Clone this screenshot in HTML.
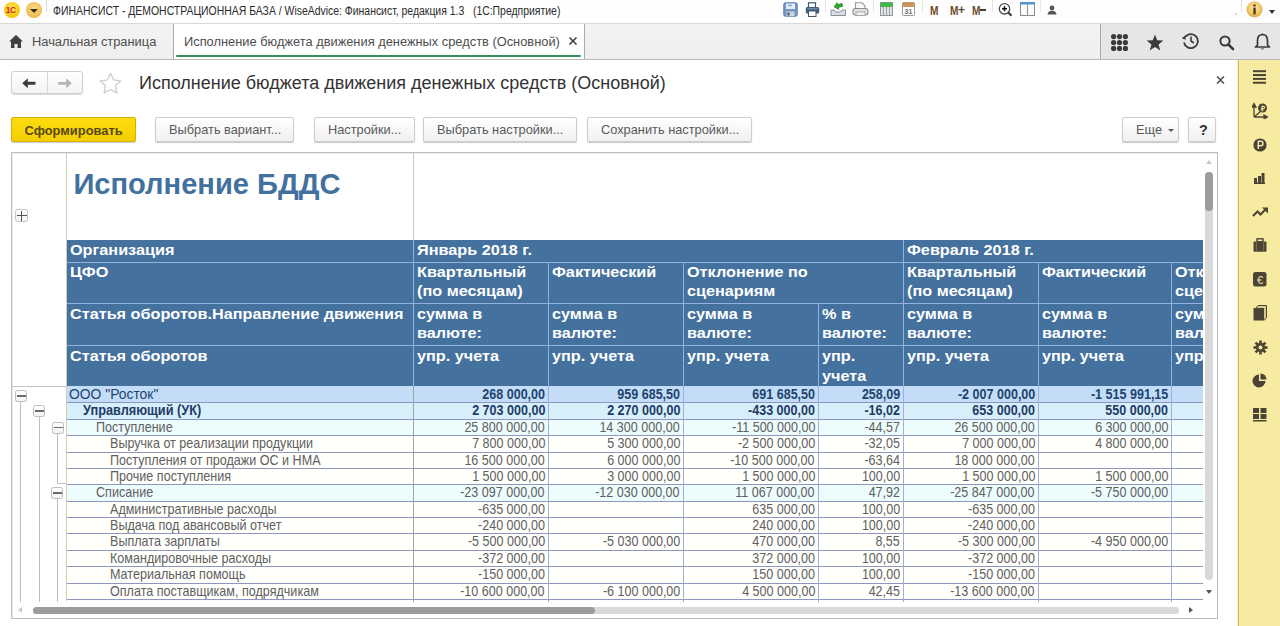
<!DOCTYPE html><html><head><meta charset="utf-8"><style>
*{box-sizing:border-box;margin:0;padding:0}
html,body{width:1280px;height:626px;overflow:hidden;background:#fff;font-family:"Liberation Sans",sans-serif;position:relative}
div,span,svg{position:absolute}
.t{white-space:nowrap}
.btn{height:25px;border:1px solid #cdcdcd;border-radius:2px;background:linear-gradient(#ffffff,#f0f0f0);box-shadow:0 1px 1px rgba(0,0,0,.22);font-size:12.8px;color:#5a5a5a;white-space:nowrap}
.btn span{top:4px;white-space:nowrap}
.hd{color:#fff;font-weight:bold;font-size:15px;line-height:19.2px;white-space:nowrap;transform:scaleX(1.082);transform-origin:0 0}
.dt{font-size:14.8px;white-space:nowrap;line-height:15px;transform:scaleX(0.848);transform-origin:0 0}
.dr{transform-origin:100% 0}
.num{text-align:right}
.mb{width:12px;height:12px;border:1px solid #bdbdbd;border-radius:2px;background:#fff}
.mb:after{content:"";position:absolute;left:2px;top:4px;width:6px;height:1.5px;background:#666}
</style></head><body>
<div style="left:0;top:0;width:1280px;height:24px;background:#fefefe;border-bottom:1px solid #d8d8d8"></div>
<div style="left:4px;top:2px;width:16px;height:16px;border-radius:50%;background:radial-gradient(circle at 50% 40%,#ffe66a,#f5c400 70%,#e0a800);"></div>
<span class="t" style="left:5.8px;top:5px;font-size:8.5px;font-weight:bold;color:#d02a10;letter-spacing:-0.6px">1С</span>
<div style="left:26px;top:2px;width:16px;height:16px;border-radius:50%;background:radial-gradient(circle at 50% 40%,#fbd98a,#efb94a 75%,#d99c2c)"></div>
<div style="left:30px;top:9px;width:0;height:0;border-left:4px solid transparent;border-right:4px solid transparent;border-top:4px solid #3a3020"></div>
<div style="left:46px;top:0;width:1px;height:12px;background:#dcdcdc"></div>
<span class="t" style="left:53px;top:3.5px;font-size:12px;color:#2a2a2a;transform:scaleX(0.869);transform-origin:0 0">ФИНАНСИСТ - ДЕМОНСТРАЦИОННАЯ БАЗА / WiseAdvice: Финансист, редакция 1.3 &nbsp; (1С:Предприятие)</span>
<div style="left:0;top:24px;width:1280px;height:36px;background:linear-gradient(#f3f3f3,#efefef);border-bottom:1px solid #b9b9b9"></div>
<svg style="left:9px;top:35px" width="14" height="13" viewBox="0 0 14 13"><path d="M7 0 L14 6.5 L12 6.5 L12 13 L8.5 13 L8.5 9 L5.5 9 L5.5 13 L2 13 L2 6.5 L0 6.5 Z" fill="#3f3f3f"/></svg>
<span class="t" style="left:32px;top:34px;font-size:12.85px;color:#4d4d4d">Начальная страница</span>
<div style="left:173px;top:24px;width:1px;height:35px;background:#a9a9a9"></div>
<div style="left:174px;top:24px;width:410px;height:35px;background:#ffffff"></div>
<span class="t" style="left:184px;top:34px;font-size:12.85px;color:#4d4d4d">Исполнение бюджета движения денежных средств (Основной)</span>
<svg style="left:568px;top:36px" width="10" height="10" viewBox="0 0 10 10"><path d="M1.5 1.5 L8.5 8.5 M8.5 1.5 L1.5 8.5" stroke="#444" stroke-width="1.7"/></svg>
<div style="left:176px;top:55px;width:405px;height:2px;background:#339160;border-radius:1px"></div>
<div style="left:584px;top:24px;width:1px;height:35px;background:#a9a9a9"></div>
<div style="left:1100px;top:24px;width:180px;height:35px;background:#e6e6e6;border-left:1px solid #a9a9a9"></div>
<div style="left:1238px;top:60px;width:42px;height:566px;background:#f7eaa1"></div>
<div style="left:1238px;top:60px;width:1px;height:566px;background:#c9b562"></div>
<div style="left:1239px;top:60px;width:1px;height:566px;background:#fbef95"></div>
<div style="left:1237px;top:60px;width:1px;height:566px;background:#f3efd8"></div>
<div style="left:11px;top:71px;width:72px;height:23px;border:1px solid #cfcfcf;border-radius:3px;background:linear-gradient(#fff,#f3f3f3);box-shadow:0 1px 1px rgba(0,0,0,.15)"></div>
<div style="left:47px;top:72px;width:1px;height:21px;background:#d6d6d6"></div>
<svg style="left:22px;top:78px" width="14" height="11" viewBox="0 0 14 11"><path d="M0.3 5.3 L5.8 0.3 L5.8 3.8 L13.5 3.8 L13.5 6.8 L5.8 6.8 L5.8 10.3 Z" fill="#3c3c3c"/></svg>
<svg style="left:58px;top:78px" width="14" height="11" viewBox="0 0 14 11"><path d="M13.7 5.3 L8.2 0.3 L8.2 3.9 L0.3 3.9 L0.3 6.7 L8.2 6.7 L8.2 10.3 Z" fill="#b4b4b4"/></svg>
<svg style="left:99px;top:72px" width="24" height="23" viewBox="0 0 24 23"><path d="M11.50 1.40 L14.62 7.91 L21.77 8.86 L16.54 13.84 L17.85 20.94 L11.50 17.50 L5.15 20.94 L6.46 13.84 L1.23 8.86 L8.38 7.91 Z" fill="none" stroke="#cdcdcd" stroke-width="1.3" stroke-linejoin="round"/></svg>
<span class="t" style="left:139px;top:73px;font-size:18px;color:#333">Исполнение бюджета движения денежных средств (Основной)</span>
<svg style="left:1216px;top:76px" width="9" height="8" viewBox="0 0 9 8"><path d="M1 0.5 L8 7.5 M8 0.5 L1 7.5" stroke="#555" stroke-width="1.6"/></svg>
<div style="left:11px;top:117px;width:125px;height:25px;border:1px solid #d4b000;border-radius:2px;background:linear-gradient(#fcdc10,#f4cf00);box-shadow:0 1px 1px rgba(0,0,0,.2)"><span class="t" style="left:12.5px;top:4.6px;font-size:12.9px;font-weight:bold;color:#574812">Сформировать</span></div>
<div class="btn" style="left:155px;top:117px;width:139px"><span style="left:13px">Выбрать вариант...</span></div>
<div class="btn" style="left:314px;top:117px;width:101px"><span style="left:13px">Настройки...</span></div>
<div class="btn" style="left:423px;top:117px;width:154px"><span style="left:13px">Выбрать настройки...</span></div>
<div class="btn" style="left:587px;top:117px;width:165px"><span style="left:13px">Сохранить настройки...</span></div>
<div class="btn" style="left:1122px;top:117px;width:57px"><span style="left:13px">Еще</span></div>
<div style="left:1168px;top:129px;width:0;height:0;border-left:3px solid transparent;border-right:3px solid transparent;border-top:3px solid #555"></div>
<div class="btn" style="left:1188px;top:117px;width:28px"><span style="left:10px;top:4px;font-size:14.5px;font-weight:bold;color:#333">?</span></div>
<div style="left:11px;top:152px;width:1207px;height:466.5px;border:1px solid #bdbdbd;box-shadow:inset 1px 1px 0 #ececec;background:#fff"></div>
<div style="left:67px;top:153px;width:1136px;height:449px;overflow:hidden">
<div style="left:346px;top:0;width:1px;height:87px;background:#c9c9c9"></div>
<span class="t" style="left:6.400000000000006px;top:15.300000000000011px;font-size:29.1px;font-weight:bold;color:#42709f">Исполнение БДДС</span>
<div style="left:0;top:87px;width:1136px;height:146px;background:#44719e"></div>
<div style="left:0;top:109px;width:1136px;height:1px;background:#91b2dc"></div>
<div style="left:0;top:150px;width:1136px;height:1px;background:#91b2dc"></div>
<div style="left:0;top:192px;width:1136px;height:1px;background:#91b2dc"></div>
<div style="left:346px;top:87px;width:1px;height:146px;background:#91b2dc"></div>
<div style="left:836px;top:87px;width:1px;height:146px;background:#91b2dc"></div>
<div style="left:481px;top:109px;width:1px;height:124px;background:#91b2dc"></div>
<div style="left:616px;top:109px;width:1px;height:124px;background:#91b2dc"></div>
<div style="left:971px;top:109px;width:1px;height:124px;background:#91b2dc"></div>
<div style="left:1104px;top:109px;width:1px;height:124px;background:#91b2dc"></div>
<div style="left:751px;top:150px;width:1px;height:83px;background:#91b2dc"></div>
<span class="hd" style="left:3px;top:87px">Организация</span>
<span class="hd" style="left:350px;top:87px">Январь 2018 г.</span>
<span class="hd" style="left:840px;top:87px">Февраль 2018 г.</span>
<span class="hd" style="left:3px;top:109px">ЦФО</span>
<span class="hd" style="left:350px;top:109px">Квартальный<br>(по месяцам)</span>
<span class="hd" style="left:485px;top:109px">Фактический</span>
<span class="hd" style="left:620px;top:109px">Отклонение по<br>сценариям</span>
<span class="hd" style="left:840px;top:109px">Квартальный<br>(по месяцам)</span>
<span class="hd" style="left:975px;top:109px">Фактический</span>
<span class="hd" style="left:1108px;top:109px">Отклонение по<br>сценариям</span>
<span class="hd" style="left:3px;top:151px">Статья оборотов.Направление движения</span>
<span class="hd" style="left:350px;top:151px">сумма в<br>валюте:</span>
<span class="hd" style="left:485px;top:151px">сумма в<br>валюте:</span>
<span class="hd" style="left:620px;top:151px">сумма в<br>валюте:</span>
<span class="hd" style="left:840px;top:151px">сумма в<br>валюте:</span>
<span class="hd" style="left:975px;top:151px">сумма в<br>валюте:</span>
<span class="hd" style="left:1108px;top:151px">сумма в<br>валюте:</span>
<span class="hd" style="left:755px;top:151px">% в<br>валюте:</span>
<span class="hd" style="left:3px;top:193.3px">Статья оборотов</span>
<span class="hd" style="left:350px;top:193.3px">упр. учета</span>
<span class="hd" style="left:485px;top:193.3px">упр. учета</span>
<span class="hd" style="left:620px;top:193.3px">упр. учета</span>
<span class="hd" style="left:840px;top:193.3px">упр. учета</span>
<span class="hd" style="left:975px;top:193.3px">упр. учета</span>
<span class="hd" style="left:1108px;top:193.3px">упр. учета</span>
<span class="hd" style="left:755px;top:193.3px">упр.<br>учета</span>
<div style="left:0;top:233px;width:1136px;height:16px;background:#c3ddf9"></div>
<span class="dt" style="left:2px;top:233.6px;color:#22426e;transform:scaleX(0.937);">ООО "Росток"</span>
<span class="dt dr" style="right:658px;top:233.6px;color:#22426e;font-weight:bold;">268 000,00</span>
<span class="dt dr" style="right:523px;top:233.6px;color:#22426e;font-weight:bold;">959 685,50</span>
<span class="dt dr" style="right:388px;top:233.6px;color:#22426e;font-weight:bold;">691 685,50</span>
<span class="dt dr" style="right:303px;top:233.6px;color:#22426e;font-weight:bold;">258,09</span>
<span class="dt dr" style="right:168px;top:233.6px;color:#22426e;font-weight:bold;">-2 007 000,00</span>
<span class="dt dr" style="right:35px;top:233.6px;color:#22426e;font-weight:bold;">-1 515 991,15</span>
<div style="left:0;top:249px;width:1136px;height:17px;background:#d7effb"></div>
<span class="dt" style="left:16px;top:249.6px;color:#1f3b66;font-weight:bold;transform:scaleX(0.861);">Управляющий (УК)</span>
<span class="dt dr" style="right:658px;top:249.6px;color:#1f3b66;font-weight:bold;">2 703 000,00</span>
<span class="dt dr" style="right:523px;top:249.6px;color:#1f3b66;font-weight:bold;">2 270 000,00</span>
<span class="dt dr" style="right:388px;top:249.6px;color:#1f3b66;font-weight:bold;">-433 000,00</span>
<span class="dt dr" style="right:303px;top:249.6px;color:#1f3b66;font-weight:bold;">-16,02</span>
<span class="dt dr" style="right:168px;top:249.6px;color:#1f3b66;font-weight:bold;">653 000,00</span>
<span class="dt dr" style="right:35px;top:249.6px;color:#1f3b66;font-weight:bold;">550 000,00</span>
<div style="left:0;top:266px;width:1136px;height:16px;background:#edfcfd"></div>
<span class="dt" style="left:29px;top:266.6px;color:#606060;transform:scaleX(0.85);">Поступление</span>
<span class="dt dr" style="right:658px;top:266.6px;color:#606060;">25 800 000,00</span>
<span class="dt dr" style="right:523px;top:266.6px;color:#606060;">14 300 000,00</span>
<span class="dt dr" style="right:388px;top:266.6px;color:#606060;">-11 500 000,00</span>
<span class="dt dr" style="right:303px;top:266.6px;color:#606060;">-44,57</span>
<span class="dt dr" style="right:168px;top:266.6px;color:#606060;">26 500 000,00</span>
<span class="dt dr" style="right:35px;top:266.6px;color:#606060;">6 300 000,00</span>
<div style="left:0;top:282px;width:1136px;height:17px;background:#fffffc"></div>
<span class="dt" style="left:42.5px;top:282.6px;color:#606060;transform:scaleX(0.85);">Выручка от реализации продукции</span>
<span class="dt dr" style="right:658px;top:282.6px;color:#606060;">7 800 000,00</span>
<span class="dt dr" style="right:523px;top:282.6px;color:#606060;">5 300 000,00</span>
<span class="dt dr" style="right:388px;top:282.6px;color:#606060;">-2 500 000,00</span>
<span class="dt dr" style="right:303px;top:282.6px;color:#606060;">-32,05</span>
<span class="dt dr" style="right:168px;top:282.6px;color:#606060;">7 000 000,00</span>
<span class="dt dr" style="right:35px;top:282.6px;color:#606060;">4 800 000,00</span>
<div style="left:0;top:299px;width:1136px;height:16px;background:#fffffc"></div>
<span class="dt" style="left:42.5px;top:299.6px;color:#606060;transform:scaleX(0.85);">Поступления от продажи ОС и НМА</span>
<span class="dt dr" style="right:658px;top:299.6px;color:#606060;">16 500 000,00</span>
<span class="dt dr" style="right:523px;top:299.6px;color:#606060;">6 000 000,00</span>
<span class="dt dr" style="right:388px;top:299.6px;color:#606060;">-10 500 000,00</span>
<span class="dt dr" style="right:303px;top:299.6px;color:#606060;">-63,64</span>
<span class="dt dr" style="right:168px;top:299.6px;color:#606060;">18 000 000,00</span>
<div style="left:0;top:315px;width:1136px;height:16px;background:#fffffc"></div>
<span class="dt" style="left:42.5px;top:315.6px;color:#606060;transform:scaleX(0.85);">Прочие поступления</span>
<span class="dt dr" style="right:658px;top:315.6px;color:#606060;">1 500 000,00</span>
<span class="dt dr" style="right:523px;top:315.6px;color:#606060;">3 000 000,00</span>
<span class="dt dr" style="right:388px;top:315.6px;color:#606060;">1 500 000,00</span>
<span class="dt dr" style="right:303px;top:315.6px;color:#606060;">100,00</span>
<span class="dt dr" style="right:168px;top:315.6px;color:#606060;">1 500 000,00</span>
<span class="dt dr" style="right:35px;top:315.6px;color:#606060;">1 500 000,00</span>
<div style="left:0;top:331px;width:1136px;height:17px;background:#edfcfd"></div>
<span class="dt" style="left:29px;top:331.6px;color:#606060;transform:scaleX(0.85);">Списание</span>
<span class="dt dr" style="right:658px;top:331.6px;color:#606060;">-23 097 000,00</span>
<span class="dt dr" style="right:523px;top:331.6px;color:#606060;">-12 030 000,00</span>
<span class="dt dr" style="right:388px;top:331.6px;color:#606060;">11 067 000,00</span>
<span class="dt dr" style="right:303px;top:331.6px;color:#606060;">47,92</span>
<span class="dt dr" style="right:168px;top:331.6px;color:#606060;">-25 847 000,00</span>
<span class="dt dr" style="right:35px;top:331.6px;color:#606060;">-5 750 000,00</span>
<div style="left:0;top:348px;width:1136px;height:16px;background:#fffffc"></div>
<span class="dt" style="left:42.5px;top:348.6px;color:#606060;transform:scaleX(0.85);">Административные расходы</span>
<span class="dt dr" style="right:658px;top:348.6px;color:#606060;">-635 000,00</span>
<span class="dt dr" style="right:388px;top:348.6px;color:#606060;">635 000,00</span>
<span class="dt dr" style="right:303px;top:348.6px;color:#606060;">100,00</span>
<span class="dt dr" style="right:168px;top:348.6px;color:#606060;">-635 000,00</span>
<div style="left:0;top:364px;width:1136px;height:16px;background:#fffffc"></div>
<span class="dt" style="left:42.5px;top:364.6px;color:#606060;transform:scaleX(0.85);">Выдача под авансовый отчет</span>
<span class="dt dr" style="right:658px;top:364.6px;color:#606060;">-240 000,00</span>
<span class="dt dr" style="right:388px;top:364.6px;color:#606060;">240 000,00</span>
<span class="dt dr" style="right:303px;top:364.6px;color:#606060;">100,00</span>
<span class="dt dr" style="right:168px;top:364.6px;color:#606060;">-240 000,00</span>
<div style="left:0;top:380px;width:1136px;height:17px;background:#fffffc"></div>
<span class="dt" style="left:42.5px;top:380.6px;color:#606060;transform:scaleX(0.85);">Выплата зарплаты</span>
<span class="dt dr" style="right:658px;top:380.6px;color:#606060;">-5 500 000,00</span>
<span class="dt dr" style="right:523px;top:380.6px;color:#606060;">-5 030 000,00</span>
<span class="dt dr" style="right:388px;top:380.6px;color:#606060;">470 000,00</span>
<span class="dt dr" style="right:303px;top:380.6px;color:#606060;">8,55</span>
<span class="dt dr" style="right:168px;top:380.6px;color:#606060;">-5 300 000,00</span>
<span class="dt dr" style="right:35px;top:380.6px;color:#606060;">-4 950 000,00</span>
<div style="left:0;top:397px;width:1136px;height:16px;background:#fffffc"></div>
<span class="dt" style="left:42.5px;top:397.6px;color:#606060;transform:scaleX(0.85);">Командировочные расходы</span>
<span class="dt dr" style="right:658px;top:397.6px;color:#606060;">-372 000,00</span>
<span class="dt dr" style="right:388px;top:397.6px;color:#606060;">372 000,00</span>
<span class="dt dr" style="right:303px;top:397.6px;color:#606060;">100,00</span>
<span class="dt dr" style="right:168px;top:397.6px;color:#606060;">-372 000,00</span>
<div style="left:0;top:413px;width:1136px;height:17px;background:#fffffc"></div>
<span class="dt" style="left:42.5px;top:413.6px;color:#606060;transform:scaleX(0.85);">Материальная помощь</span>
<span class="dt dr" style="right:658px;top:413.6px;color:#606060;">-150 000,00</span>
<span class="dt dr" style="right:388px;top:413.6px;color:#606060;">150 000,00</span>
<span class="dt dr" style="right:303px;top:413.6px;color:#606060;">100,00</span>
<span class="dt dr" style="right:168px;top:413.6px;color:#606060;">-150 000,00</span>
<div style="left:0;top:430px;width:1136px;height:16px;background:#fffffc"></div>
<span class="dt" style="left:42.5px;top:430.6px;color:#606060;transform:scaleX(0.85);">Оплата поставщикам, подрядчикам</span>
<span class="dt dr" style="right:658px;top:430.6px;color:#606060;">-10 600 000,00</span>
<span class="dt dr" style="right:523px;top:430.6px;color:#606060;">-6 100 000,00</span>
<span class="dt dr" style="right:388px;top:430.6px;color:#606060;">4 500 000,00</span>
<span class="dt dr" style="right:303px;top:430.6px;color:#606060;">42,45</span>
<span class="dt dr" style="right:168px;top:430.6px;color:#606060;">-13 600 000,00</span>
<div style="left:0;top:249px;width:1136px;height:1px;background:#8e96c0"></div>
<div style="left:0;top:266px;width:1136px;height:1px;background:#8e96c0"></div>
<div style="left:0;top:282px;width:1136px;height:1px;background:#8e96c0"></div>
<div style="left:0;top:299px;width:1136px;height:1px;background:#8e96c0"></div>
<div style="left:0;top:315px;width:1136px;height:1px;background:#8e96c0"></div>
<div style="left:0;top:331px;width:1136px;height:1px;background:#8e96c0"></div>
<div style="left:0;top:348px;width:1136px;height:1px;background:#8e96c0"></div>
<div style="left:0;top:364px;width:1136px;height:1px;background:#8e96c0"></div>
<div style="left:0;top:380px;width:1136px;height:1px;background:#8e96c0"></div>
<div style="left:0;top:397px;width:1136px;height:1px;background:#8e96c0"></div>
<div style="left:0;top:413px;width:1136px;height:1px;background:#8e96c0"></div>
<div style="left:0;top:430px;width:1136px;height:1px;background:#8e96c0"></div>
<div style="left:0;top:446px;width:1136px;height:1px;background:#8e96c0"></div>
<div style="left:346px;top:233px;width:1px;height:216px;background:#a3a3a3"></div>
<div style="left:481px;top:233px;width:1px;height:216px;background:#a9acd0"></div>
<div style="left:616px;top:233px;width:1px;height:216px;background:#a9acd0"></div>
<div style="left:751px;top:233px;width:1px;height:216px;background:#a9acd0"></div>
<div style="left:836px;top:233px;width:1px;height:216px;background:#a9acd0"></div>
<div style="left:971px;top:233px;width:1px;height:216px;background:#a9acd0"></div>
<div style="left:1104px;top:233px;width:1px;height:216px;background:#a9acd0"></div>
</div>
<div style="left:66px;top:153px;width:1px;height:448px;background:#d4cfb4"></div>
<div style="left:12px;top:386px;width:54px;height:1px;background:#c4c4c4"></div>
<div style="left:14.5px;top:209px;width:13px;height:13px;border:1px solid #c4c4c4;border-radius:2.5px;background:linear-gradient(#fff,#f2f2f2)"></div>
<div style="left:16.5px;top:215px;width:10px;height:1.2px;background:#555"></div><div style="left:21px;top:210.8px;width:1.2px;height:10px;background:#555"></div>
<div style="left:20px;top:401.5px;width:1px;height:200.5px;background:#bdbdbd"></div>
<div style="left:39px;top:417px;width:1px;height:185px;background:#bdbdbd"></div>
<div style="left:57px;top:433.5px;width:1px;height:50.5px;background:#bdbdbd"></div>
<div style="left:57px;top:499px;width:1px;height:103px;background:#bdbdbd"></div>
<div style="left:57px;top:483px;width:9px;height:1px;background:#bdbdbd"></div>
<div style="left:15px;top:390px;width:12px;height:12px;border:1px solid #bcbcbc;border-radius:2.5px;background:linear-gradient(#fff,#f3f3f3)"></div>
<div style="left:16.5px;top:395px;width:9px;height:1.6px;background:#6a6a6a"></div>
<div style="left:33px;top:405px;width:12px;height:12px;border:1px solid #bcbcbc;border-radius:2.5px;background:linear-gradient(#fff,#f3f3f3)"></div>
<div style="left:34.5px;top:410px;width:9px;height:1.6px;background:#6a6a6a"></div>
<div style="left:52px;top:421.5px;width:12px;height:12px;border:1px solid #bcbcbc;border-radius:2.5px;background:linear-gradient(#fff,#f3f3f3)"></div>
<div style="left:53.5px;top:426.5px;width:9px;height:1.6px;background:#6a6a6a"></div>
<div style="left:51px;top:487px;width:12px;height:12px;border:1px solid #bcbcbc;border-radius:2.5px;background:linear-gradient(#fff,#f3f3f3)"></div>
<div style="left:52.5px;top:492px;width:9px;height:1.6px;background:#6a6a6a"></div>
<div style="left:1205px;top:172px;width:8px;height:408px;background:#d9d9d9;border-radius:4px"></div>
<div style="left:1205px;top:172px;width:8px;height:39px;background:#9c9c9c;border-radius:4px"></div>
<div style="left:1206px;top:160px;width:0;height:0;border-left:3.5px solid transparent;border-right:3.5px solid transparent;border-bottom:4px solid #c8c8c8"></div>
<div style="left:1206px;top:590px;width:0;height:0;border-left:3.5px solid transparent;border-right:3.5px solid transparent;border-top:4px solid #555"></div>
<div style="left:33px;top:607px;width:1146px;height:7px;background:#d9d9d9;border-radius:4px"></div>
<div style="left:33px;top:607px;width:562px;height:7px;background:#9c9c9c;border-radius:4px"></div>
<div style="left:18px;top:607px;width:0;height:0;border-top:3.5px solid transparent;border-bottom:3.5px solid transparent;border-right:4px solid #c8c8c8"></div>
<div style="left:1189px;top:607px;width:0;height:0;border-top:3.5px solid transparent;border-bottom:3.5px solid transparent;border-left:4px solid #555"></div>
<svg style="left:783px;top:2px" width="15" height="15" viewBox="0 0 15 15"><rect x="0.8" y="0.8" width="13.4" height="13.4" rx="1.5" fill="#7396c6" stroke="#5a7fb2" stroke-width="1"/><rect x="3" y="1.5" width="9" height="5.5" fill="#e4eefa"/><rect x="5" y="2.5" width="4" height="2" fill="#9fb2c8"/><rect x="3.5" y="9.5" width="8" height="4.5" fill="#cdd6de"/><rect x="4.5" y="10.5" width="2" height="3" fill="#405060"/></svg>
<svg style="left:805px;top:2px" width="15" height="15" viewBox="0 0 15 15"><rect x="3.5" y="0.8" width="7" height="5" fill="#fff" stroke="#40586e" stroke-width="1.2"/><rect x="0.8" y="5" width="13.4" height="6.5" rx="1.5" fill="#3f6080"/><rect x="3.5" y="9" width="7.5" height="5.5" fill="#fff" stroke="#40586e" stroke-width="1"/><line x1="2.5" y1="6.8" x2="12.5" y2="6.8" stroke="#9ab0c8" stroke-width="0.8"/></svg>
<div style="left:825px;top:0;width:1px;height:12px;background:#e4e4e4"></div>
<svg style="left:830px;top:2px" width="17" height="15" viewBox="0 0 17 15"><path d="M4 4 L8 0.5 L8 2.5 L12.5 2.5 L12.5 5.5 L8 5.5 L8 7.5 Z" transform="rotate(-15 8 4)" fill="#2ea82a" stroke="#1f7d1c" stroke-width="0.6"/><path d="M1 8 L4 8 L5.5 10 L10.5 10 L12 8 L15.5 8 L15.5 13.5 L1 13.5 Z" fill="#d8dce6" stroke="#8a8f98" stroke-width="1"/></svg>
<svg style="left:852px;top:2px" width="17" height="15" viewBox="0 0 17 15"><path d="M3.5 0.8 L10 0.8 L13 3.8 L13 7 L3.5 7 Z" fill="#fafafa" stroke="#9a9a9a" stroke-width="1.1"/><rect x="1" y="6.5" width="15" height="6.5" rx="2.5" fill="#e2e2e2" stroke="#8c8c8c" stroke-width="1.1"/><rect x="4" y="10" width="9" height="3.5" fill="#f4f4f4" stroke="#999" stroke-width="0.8"/></svg>
<div style="left:873px;top:0;width:1px;height:12px;background:#e4e4e4"></div>
<svg style="left:880px;top:2px" width="13" height="14" viewBox="0 0 13 14"><rect x="0.5" y="0.5" width="12" height="13" fill="#dfe3e8" stroke="#8e969e" stroke-width="1"/><rect x="0.5" y="0.5" width="12" height="4.5" fill="#41b84a"/><path d="M3.5 5 V13.5 M6.5 5 V13.5 M9.5 5 V13.5" stroke="#9aa2aa" stroke-width="1"/></svg>
<svg style="left:902px;top:2px" width="13" height="14" viewBox="0 0 13 14"><rect x="0.5" y="0.5" width="12" height="13" rx="1" fill="#fff" stroke="#9a9a9a" stroke-width="1"/><rect x="0.5" y="0.5" width="12" height="4.5" fill="#d0945a"/><text x="6.5" y="12" font-family="Liberation Sans" font-weight="bold" font-size="7" fill="#6a6a6a" text-anchor="middle">31</text></svg>
<div style="left:922px;top:0;width:1px;height:12px;background:#e4e4e4"></div>
<span class="t" style="left:930px;top:3px;font-size:13px;font-weight:bold;color:#6e4a2a;transform:scaleX(0.78);transform-origin:0 0">M</span>
<span class="t" style="left:949.5px;top:3px;font-size:13px;font-weight:bold;color:#6e4a2a;transform:scaleX(0.78);transform-origin:0 0">M</span>
<span class="t" style="left:958px;top:3px;font-size:12px;font-weight:bold;color:#5e4a3a">+</span>
<span class="t" style="left:971.5px;top:3px;font-size:13px;font-weight:bold;color:#6e4a2a;transform:scaleX(0.78);transform-origin:0 0">M</span>
<div style="left:980px;top:9px;width:6px;height:1.6px;background:#4a3a2a"></div>
<div style="left:992px;top:0;width:1px;height:12px;background:#e4e4e4"></div>
<svg style="left:998px;top:2px" width="15" height="15" viewBox="0 0 15 15"><circle cx="6.5" cy="6.8" r="5.2" fill="#fff" stroke="#4a4a4a" stroke-width="1.3"/><path d="M4 6.8 H9 M6.5 4.3 V9.3" stroke="#111" stroke-width="1.6"/><path d="M10.3 10.5 L13.5 13.8" stroke="#333" stroke-width="2"/></svg>
<svg style="left:1020px;top:2px" width="15" height="14" viewBox="0 0 15 14"><rect x="0.5" y="0.5" width="14" height="13" fill="#fdfdfd" stroke="#8a8a8a" stroke-width="1"/><rect x="0" y="0" width="15" height="2.6" rx="1" fill="#4f94d4"/><path d="M7.5 2.5 V13.5" stroke="#9a9a9a" stroke-width="1.2"/></svg>
<div style="left:1040px;top:0;width:1px;height:12px;background:#e8e8e8"></div>
<svg style="left:1047px;top:5px" width="10" height="10" viewBox="0 0 10 10"><circle cx="5" cy="3" r="2.4" fill="#555"/><path d="M0.5 9.5 Q1 5.8 5 5.8 Q9 5.8 9.5 9.5 Z" fill="#555"/></svg>
<div style="left:1235px;top:13px;width:2px;height:2px;background:#d8d8d8"></div>
<div style="left:1241px;top:0;width:1px;height:12px;background:#e0e0e0"></div>
<svg style="left:1246px;top:1px" width="17" height="17" viewBox="0 0 17 17"><defs><radialGradient id="ig" cx="50%" cy="40%" r="60%"><stop offset="0" stop-color="#fde7a6"/><stop offset="0.7" stop-color="#f2c560"/><stop offset="1" stop-color="#dca040"/></radialGradient></defs><circle cx="8.5" cy="8.5" r="7.6" fill="url(#ig)" stroke="#e0b050" stroke-width="0.8"/><rect x="7.3" y="3.5" width="2.4" height="2" fill="#4a3a20"/><rect x="7.3" y="6.6" width="2.4" height="6.8" fill="#4a3a20"/></svg>
<div style="left:1269px;top:10px;width:0;height:0;border-left:3.5px solid transparent;border-right:3.5px solid transparent;border-top:4px solid #333"></div>
<svg style="left:1111px;top:33.5px" width="17" height="17" viewBox="0 0 17 17"><circle cx="2.6" cy="2.6" r="2.6" fill="#3a3a3a"/><circle cx="2.6" cy="8.5" r="2.6" fill="#3a3a3a"/><circle cx="2.6" cy="14.4" r="2.6" fill="#3a3a3a"/><circle cx="8.5" cy="2.6" r="2.6" fill="#3a3a3a"/><circle cx="8.5" cy="8.5" r="2.6" fill="#3a3a3a"/><circle cx="8.5" cy="14.4" r="2.6" fill="#3a3a3a"/><circle cx="14.4" cy="2.6" r="2.6" fill="#3a3a3a"/><circle cx="14.4" cy="8.5" r="2.6" fill="#3a3a3a"/><circle cx="14.4" cy="14.4" r="2.6" fill="#3a3a3a"/></svg>
<svg style="left:1146px;top:34px" width="18" height="17" viewBox="0 0 18 17"><path d="M9 0.5 L11.2 6.3 L17.4 6.5 L12.5 10.4 L14.3 16.5 L9 13 L3.7 16.5 L5.5 10.4 L0.6 6.5 L6.8 6.3 Z" fill="#3a3a3a"/></svg>
<svg style="left:1181px;top:32px" width="18" height="17" viewBox="0 0 18 17"><path d="M4.2 5 A7 7 0 1 1 3 10.5" fill="none" stroke="#3a3a3a" stroke-width="1.8"/><path d="M1 7.2 L5.2 7.2 L3.5 3 Z" fill="#3a3a3a" transform="rotate(20 3.5 6)"/><path d="M10 4.5 V9 L12.8 11" fill="none" stroke="#3a3a3a" stroke-width="1.6"/></svg>
<svg style="left:1219px;top:35px" width="16" height="16" viewBox="0 0 16 16"><circle cx="6" cy="6" r="4.6" fill="none" stroke="#3a3a3a" stroke-width="2"/><path d="M9.3 9.3 L14 14" stroke="#3a3a3a" stroke-width="2.6" stroke-linecap="round"/></svg>
<svg style="left:1254px;top:33px" width="17" height="18" viewBox="0 0 17 18"><path d="M8.5 1.5 C12.5 1.5 13.5 4.5 13.5 8 L13.5 12 L15.5 14 L1.5 14 L3.5 12 L3.5 8 C3.5 4.5 4.5 1.5 8.5 1.5 Z" fill="none" stroke="#3a3a3a" stroke-width="1.7" stroke-linejoin="round"/><path d="M6.5 15.5 Q8.5 17.5 10.5 15.5 Z" fill="#3a3a3a"/><circle cx="8.5" cy="1.5" r="1" fill="#3a3a3a"/></svg>
<svg style="left:1253px;top:70px" width="13" height="14" viewBox="0 0 13 14"><rect x="0" y="0.2" width="13" height="2" fill="#4b4434"/><rect x="0" y="4.05" width="13" height="2" fill="#4b4434"/><rect x="0" y="7.9" width="13" height="2" fill="#4b4434"/><rect x="0" y="11.75" width="13" height="2" fill="#4b4434"/></svg>
<svg style="left:1252px;top:102px" width="16" height="17" viewBox="0 0 16 17"><path d="M2 15 V3 M0 5 L2 1.5 L4 5 Z M2 15 H14 M12 13 L15.5 15 L12 17 Z M2 15 L8 10" stroke="#4b4434" stroke-width="1.3" fill="#4b4434"/><circle cx="10.5" cy="6" r="4.5" fill="#4b4434"/><text x="10.5" y="8.6" font-family="Liberation Sans" font-size="7" font-weight="bold" fill="#f7eaa1" text-anchor="middle">₽</text></svg>
<svg style="left:1253px;top:138px" width="14" height="14" viewBox="0 0 14 14"><circle cx="7" cy="7" r="6.6" fill="#4b4434"/><path d="M5.3 11 V3.3 H7.8 A2.2 2.2 0 0 1 7.8 7.7 H4.3" fill="none" stroke="#f4e6b0" stroke-width="1.4"/></svg>
<svg style="left:1254px;top:173px" width="11" height="11" viewBox="0 0 11 11"><rect x="0" y="5" width="3" height="5" fill="#4b4434"/><rect x="4" y="3" width="3" height="7" fill="#4b4434"/><rect x="7.5" y="0" width="3" height="10" fill="#4b4434"/><rect x="0" y="9.5" width="11" height="1.5" fill="#4b4434"/></svg>
<svg style="left:1252px;top:207px" width="17" height="10" viewBox="0 0 17 10"><path d="M1 9 L5.5 4.5 L8.5 7.5 L13 3" fill="none" stroke="#4b4434" stroke-width="2"/><path d="M10 0.5 L16 0.5 L16 6.5 Z" fill="#4b4434"/></svg>
<svg style="left:1253px;top:238px" width="14" height="14" viewBox="0 0 14 14"><rect x="4" y="0.8" width="6" height="3" fill="none" stroke="#4b4434" stroke-width="1.4"/><rect x="0.5" y="3.5" width="13" height="10.2" rx="1" fill="#4b4434"/><path d="M3.3 4 V13.5 M10.7 4 V13.5" stroke="#9a8c60" stroke-width="0.7"/></svg>
<svg style="left:1253px;top:272px" width="14" height="15" viewBox="0 0 14 15"><rect x="0" y="0" width="13.5" height="14.5" rx="2.5" fill="#4b4434"/><text x="7" y="11.5" font-family="Liberation Sans" font-size="11" fill="#f4e6b0" text-anchor="middle">€</text></svg>
<svg style="left:1253px;top:305px" width="14" height="16" viewBox="0 0 14 16"><path d="M3 3 L5 0.5 L13.5 0.5 L13.5 12.5 L11 15.5" fill="#d9c98a" stroke="#4b4434" stroke-width="1"/><rect x="0.5" y="3" width="10.5" height="12.5" fill="#4b4434"/></svg>
<svg style="left:1253px;top:340px" width="15" height="15" viewBox="0 0 15 15"><g transform="translate(7.5 7.5)"><circle r="4.6" fill="#4b4434"/><rect x="-1.3" y="-7" width="2.6" height="3.5" fill="#4b4434" transform="rotate(0)"/><rect x="-1.3" y="-7" width="2.6" height="3.5" fill="#4b4434" transform="rotate(45)"/><rect x="-1.3" y="-7" width="2.6" height="3.5" fill="#4b4434" transform="rotate(90)"/><rect x="-1.3" y="-7" width="2.6" height="3.5" fill="#4b4434" transform="rotate(135)"/><rect x="-1.3" y="-7" width="2.6" height="3.5" fill="#4b4434" transform="rotate(180)"/><rect x="-1.3" y="-7" width="2.6" height="3.5" fill="#4b4434" transform="rotate(225)"/><rect x="-1.3" y="-7" width="2.6" height="3.5" fill="#4b4434" transform="rotate(270)"/><rect x="-1.3" y="-7" width="2.6" height="3.5" fill="#4b4434" transform="rotate(315)"/><circle r="2" fill="#f7eaa1"/></g></svg>
<svg style="left:1252px;top:373px" width="15" height="15" viewBox="0 0 15 15"><path d="M7 1.5 A6.5 6.5 0 1 0 13.5 8 L7 8 Z" fill="#4b4434"/><path d="M8.5 0.5 A6 6 0 0 1 14.5 6.5 L8.5 6.5 Z" fill="#4b4434"/><path d="M8.5 3 L12 6.5" stroke="#f8e89e" stroke-width="0"/></svg>
<svg style="left:1253px;top:408px" width="14" height="14" viewBox="0 0 14 14"><rect x="0" y="0" width="6" height="5" fill="#4b4434"/><rect x="7.5" y="0" width="6" height="5" fill="#4b4434"/><rect x="0" y="6" width="6" height="5" fill="#4b4434"/><rect x="7.5" y="6" width="6" height="5" fill="#4b4434"/><rect x="0" y="12" width="13.5" height="1.5" fill="#4b4434"/></svg>
</body></html>
